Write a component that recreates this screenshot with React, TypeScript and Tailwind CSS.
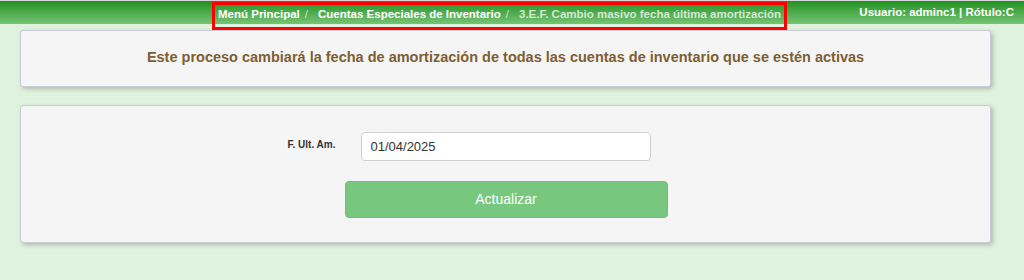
import React from 'react';

const crumbs = ['Menú Principal', 'Cuentas Especiales de Inventario'];

export default function App() {
  return (
    <div className="w-[1024px] h-[280px] bg-[#dff2de] overflow-hidden font-['Liberation_Sans',Arial,sans-serif]">
      {/* Top bar */}
      <div className="h-[24px] border-t border-[#d6d6d6] bg-gradient-to-b from-[#1b921b] to-[#74c474] flex items-start text-[11.5px] font-bold text-white">
        <div className="relative z-10 ml-[212px] mt-[1px] h-[28px] w-[575px] border-[3px] border-[#f00] flex items-center pl-[3px] pb-[2px]">
          {crumbs.map((c) => (
            <React.Fragment key={c}>
              <span>{c}</span>
              <span className="text-[#cfe6cf] font-normal pl-[5px] pr-[10px]">/</span>
            </React.Fragment>
          ))}
          <span className="text-[#d3e8d3]">3.E.F. Cambio masivo fecha última amortización</span>
        </div>
        <div className="ml-auto pr-[10px] h-[23px] flex items-center">Usuario: adminc1 | Rótulo:C</div>
      </div>

      <div className="px-[20px] pt-[6px] flex flex-col gap-[18px]">
        {/* Info card */}
        <div className="w-[971px] h-[57px] bg-[#f5f5f5] border border-[#c9cbd6] rounded-[3px] shadow-[2px_2px_4px_rgba(0,0,0,0.22)] flex items-center justify-center">
          <p className="text-[14.5px] text-[#7d5f33] font-bold pb-[1px]">
            Este proceso cambiará la fecha de amortización de todas las cuentas de inventario que se estén activas
          </p>
        </div>

        {/* Form card */}
        <div className="w-[971px] h-[138px] bg-[#f5f5f5] border border-[#c9cbd6] rounded-[3px] shadow-[2px_2px_4px_rgba(0,0,0,0.22)] pt-[26px] flex flex-col items-center">
          <div className="w-full grid grid-cols-[1fr_290px_1fr] items-center">
            <label className="justify-self-end mr-[25px] mb-[4px] text-[10px] font-bold text-[#333]">F. Ult. Am.</label>
            <input
              readOnly
              value="01/04/2025"
              className="h-[29px] w-[290px] bg-white border border-[#cfcfcf] rounded-[4px] px-[9px] text-[13px] text-[#333] outline-none"
            />
            <div />
          </div>
          <button className="mt-[20px] ml-[1px] w-[323px] h-[37px] bg-[#78c77f] border border-[#70bf77] rounded-[4px] text-white text-[14px]">
            Actualizar
          </button>
        </div>
      </div>
    </div>
  );
}
